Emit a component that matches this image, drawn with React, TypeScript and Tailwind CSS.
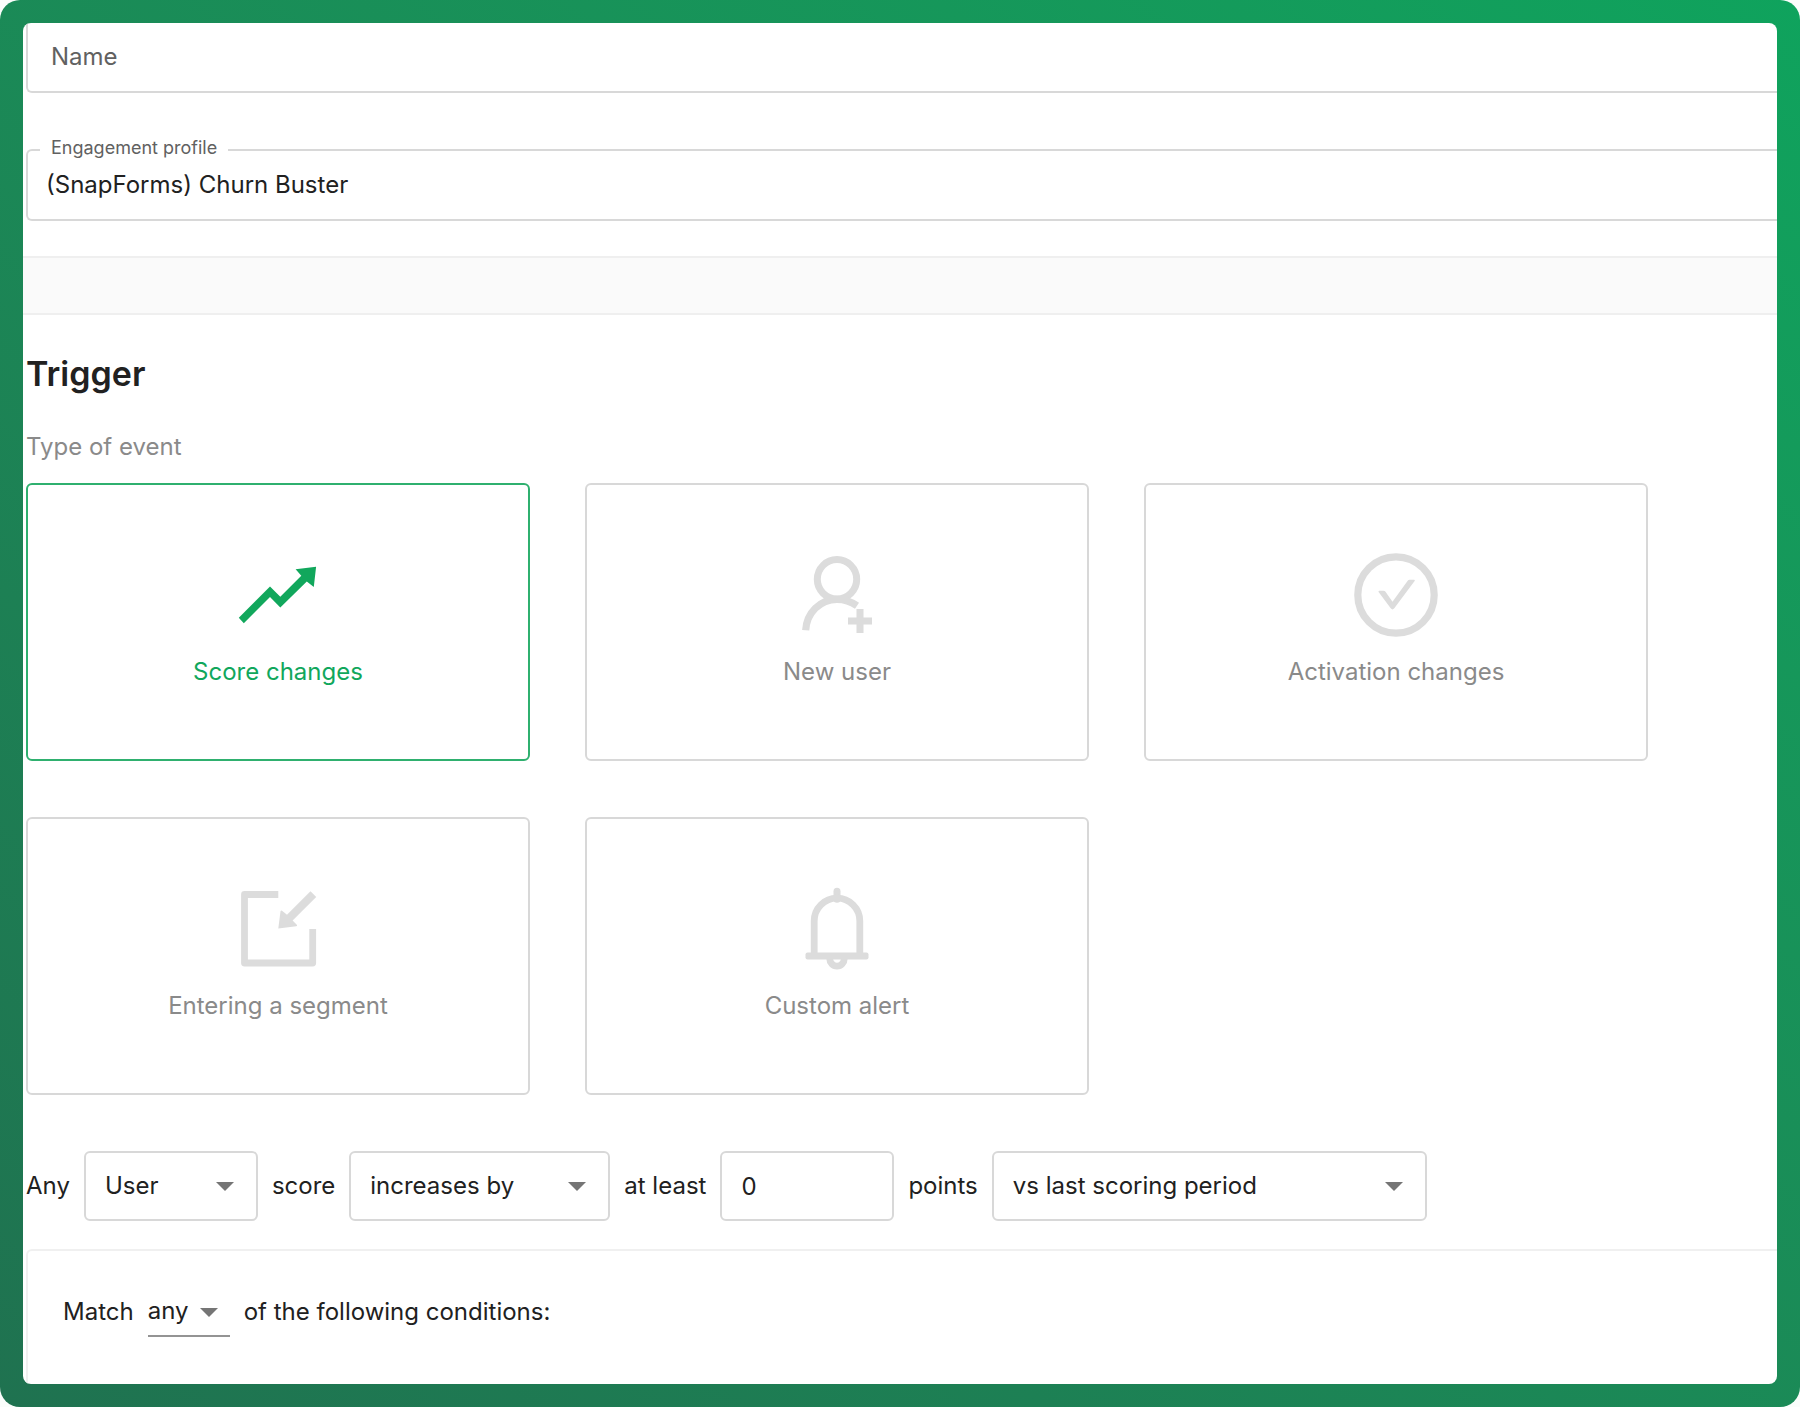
import { clsx } from "clsx"
import { useState, type ReactNode } from "react"

const EVENTS: { id: string; label: string; icon: ReactNode }[] = [
  { id: "score", label: "Score changes", icon: <TrendIcon /> },
  { id: "user", label: "New user", icon: <NewUserIcon /> },
  { id: "activation", label: "Activation changes", icon: <CheckCircleIcon /> },
  { id: "segment", label: "Entering a segment", icon: <EnterIcon /> },
  { id: "alert", label: "Custom alert", icon: <BellIcon /> },
]

function Icon({ children }: { children: ReactNode }) {
  return (
    <svg viewBox="0 0 84 84" className="size-[84px]" fill="none" aria-hidden="true">
      {children}
    </svg>
  )
}

function TrendIcon() {
  return (
    <Icon>
      <path
        fill="currentColor"
        d="M2.8 64.7 34 33.500l10.300 10.300 21-21.100-5.700-6.400 20.500-2.600-2.300 20.400-7-5.700-26.500 26L34 44.100 7.800 70.200Z"
      />
    </Icon>
  )
}

function NewUserIcon() {
  return (
    <Icon>
      <g stroke="currentColor">
        <circle cx="42" cy="26.3" r="19.7" strokeWidth="7" />
        <path d="M10.7 77.3C11.6 60 25 46.3 42 46.3c7 0 13.6 2 20 6.4" strokeWidth="7.2" />
        <path d="M65 56v24M53 68h24" strokeWidth="7" />
      </g>
    </Icon>
  )
}

function CheckCircleIcon() {
  return (
    <Icon>
      <circle cx="42" cy="42" r="38.2" stroke="currentColor" strokeWidth="7.2" />
      <path
        fill="currentColor"
        d="M25.3 37.700h4.400q1 0 1.600.8l7.200 10.200 15.200-21q.7-1 1.800-1h4.500q1.400.1.600 1.300L40.300 55.300q-1.800 2.200-3.600 0L24.600 38.900q-.6-1 .7-1.200Z"
      />
    </Icon>
  )
}

function EnterIcon() {
  return (
    <Icon>
      <path
        d="M42.3 7.500H8.500V76h68.200V42"
        stroke="currentColor"
        strokeWidth="6.800"
        strokeLinejoin="round"
      />
      <path
        fill="currentColor"
        d="M74.500 4.300 80.200 9.900 56.600 33.500l4.400 4.500q.5 1-.7 1.200L42.300 41.500l2.200-17.300q.4-1.300 1.500-.5l5 4.100Z"
      />
    </Icon>
  )
}

function BellIcon() {
  return (
    <Icon>
      <g stroke="currentColor" strokeWidth="6.800">
        <path d="M42 4.200v8" strokeLinecap="round" strokeWidth="7" />
        <path d="M19.200 68V34a22.800 22.800 0 0 1 45.600 0v34" />
        <path d="M34.700 71.500a7.300 7.600 0 0 0 14.600 0" />
      </g>
      <rect x="10.500" y="65.500" width="63" height="7" rx="2" fill="currentColor" />
    </Icon>
  )
}

function Caret({ className }: { className: string }) {
  return (
    <svg
      viewBox="0 0 18 9"
      className={clsx("pointer-events-none absolute h-[9px] w-[18px]", className)}
      aria-hidden="true"
    >
      <path d="M0 0h18L9 9Z" fill="#757575" />
    </svg>
  )
}

function SelectBox({
  label,
  options,
  className,
}: {
  label: string
  options: string[]
  className: string
}) {
  return (
    <div className={clsx("relative", className)}>
      <select
        aria-label={label}
        className="block h-[70px] w-full appearance-none rounded-md border-2 border-[#d8d8d8] bg-white pr-12 pl-[19px] outline-none focus-visible:border-[#11a75c]"
      >
        {options.map((option) => (
          <option key={option}>{option}</option>
        ))}
      </select>
      <Caret className="top-[31px] right-6" />
    </div>
  )
}

function ProfileFields() {
  return (
    <div className="pl-[3px]">
      <input
        type="text"
        aria-label="Name"
        placeholder="Name"
        className="block h-[70px] w-full rounded-bl-md border-b-2 border-l-2 border-[#d8d8d8] pb-[2px] pl-[23px] outline-none placeholder:text-[#616161]"
      />
      <div className="relative mt-14">
        <label
          htmlFor="profile"
          className="absolute -top-[11px] left-[14px] bg-white px-[11px] text-lg leading-5 text-[#616161]"
        >
          Engagement profile
        </label>
        <select
          id="profile"
          className="block h-[72px] w-full appearance-none rounded-l-md border-2 border-r-0 border-[#d8d8d8] bg-white pl-[18px] outline-none"
        >
          <option>(SnapForms) Churn Buster</option>
        </select>
      </div>
    </div>
  )
}

function EventPicker() {
  const [selected, setSelected] = useState("score")
  return (
    <div className="mt-[18px] grid grid-cols-3 gap-x-[55px] gap-y-14 pr-[129px]">
      {EVENTS.map((event) => (
        <button
          key={event.id}
          type="button"
          aria-pressed={event.id === selected}
          onClick={() => setSelected(event.id)}
          className={clsx(
            "flex flex-col items-center gap-[17px] rounded-md border-2 pt-[68px] pb-[69px]",
            event.id === selected ? "border-[#2fb06f] text-[#11a75c]" : "border-[#d8d8d8]",
          )}
        >
          <span className={clsx(event.id !== selected && "text-[#dcdcdc]")}>{event.icon}</span>
          <span className={clsx("leading-9", event.id !== selected && "text-[#8a8a8a]")}>
            {event.label}
          </span>
        </button>
      ))}
    </div>
  )
}

export default function App() {
  return (
    <div className="bg-[#fafdfb] font-['Inter',sans-serif] text-2xl leading-9 text-[#212121]">
      <div className="flex min-h-screen flex-col rounded-[20px] bg-linear-to-tr from-[#1f7250] to-[#0fa35d] p-[23px]">
        <main className="flex flex-1 flex-col overflow-hidden rounded-lg bg-white">
          <ProfileFields />
          <div className="mt-[35px] h-[59px] border-y-2 border-[#efefef] bg-[#fafafa]" />

          <section className="flex flex-1 flex-col pl-[3px]">
            <h1 className="mt-9 text-[34px] leading-[46px] font-semibold">Trigger</h1>
            <h2 className="mt-8 text-[#8a8a8a]">Type of event</h2>
            <EventPicker />

            <div className="mt-14 flex items-center gap-[14px]">
              <span>Any</span>
              <SelectBox label="Subject" options={["User", "Account"]} className="w-[174px]" />
              <span>score</span>
              <SelectBox
                label="Direction"
                options={["increases by", "decreases by"]}
                className="w-[261px]"
              />
              <span>at least</span>
              <input
                type="text"
                inputMode="numeric"
                aria-label="Points"
                defaultValue="0"
                className="h-[70px] w-[174px] rounded-md border-2 border-[#d8d8d8] pl-[19px] outline-none focus-visible:border-[#11a75c]"
              />
              <span>points</span>
              <SelectBox
                label="Comparison"
                options={["vs last scoring period", "vs first scoring period"]}
                className="w-[435px]"
              />
            </div>

            <div className="mt-7 flex flex-1 items-start gap-[14px] rounded-tl-md border-t-2 border-l-2 border-[#f0f0f0] pt-10 pl-[35px]">
              <span className="mt-[3px]">Match</span>
              <div className="relative">
                <select
                  aria-label="Match mode"
                  className="block h-[46px] w-[82px] appearance-none border-b-2 border-[#949494] bg-transparent pb-[4px] outline-none"
                >
                  <option>any</option>
                  <option>all</option>
                </select>
                <Caret className="top-[17px] right-3" />
              </div>
              <span className="mt-[3px]">of the following conditions:</span>
            </div>
          </section>
        </main>
      </div>
    </div>
  )
}
